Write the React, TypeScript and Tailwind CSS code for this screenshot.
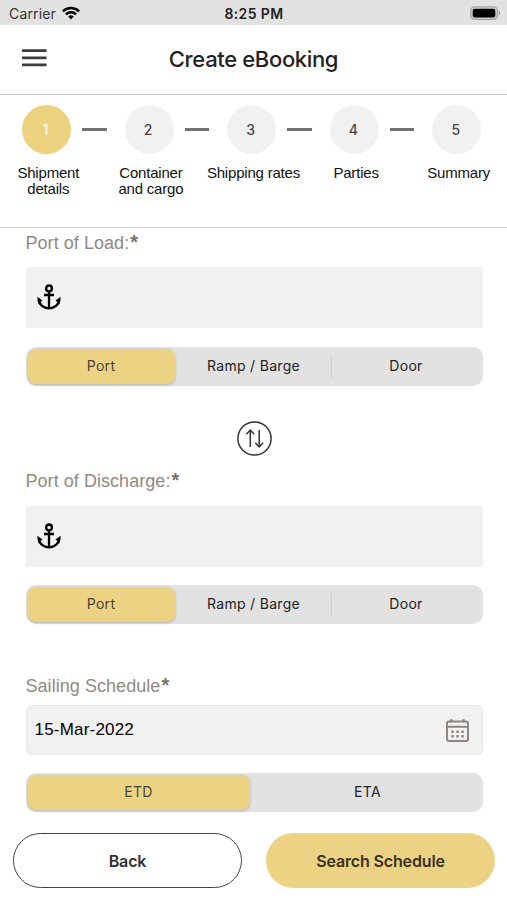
import clsx from 'clsx';

interface Step {
    number: number;
    label: string;
}

const STEPS: Step[] = [
    { number: 1, label: 'Shipment details' },
    { number: 2, label: 'Container and cargo' },
    { number: 3, label: 'Shipping rates' },
    { number: 4, label: 'Parties' },
    { number: 5, label: 'Summary' },
];

function StatusBar() {
    return (
        <div className="grid h-[25px] grid-cols-3 items-center bg-[#e2e2e2] pt-[2px] pr-[6px] pl-[9px] text-[14px] leading-[22px] text-[#222]">
            <div className="flex items-center gap-[6px]">
                <span className="tracking-[0.15px] text-[#333]">Carrier</span>
                <svg className="-mt-[2px]" width="18" height="14" viewBox="0 0 18 14" fill="none" stroke="#000" strokeWidth="2.5">
                    <path d="M0.9 5.3a11.5 11.5 0 0 1 16.2 0" />
                    <path d="M3.9 8.4a7.2 7.2 0 0 1 10.2 0" />
                    <path d="M9 13.5l-2.8-2.9a4 4 0 0 1 5.6 0z" fill="#000" stroke="none" />
                </svg>
            </div>
            <span className="-ml-[2px] text-center font-semibold whitespace-nowrap tracking-[0.4px]">8:25 PM</span>
            <svg className="justify-self-end" width="31" height="15" viewBox="0 0 31 15">
                <rect x="0.8" y="0.8" width="26.6" height="12.6" rx="3.8" fill="#d2d2d2" stroke="#a3a3a3" strokeWidth="1.3" />
                <rect x="2.7" y="2.7" width="22.6" height="8.8" rx="2" fill="#000" />
                <path d="M28.8 4.8c1.6.6 1.6 4 0 4.6z" fill="#999" />
            </svg>
        </div>
    );
}

function Header() {
    return (
        <header className="grid h-[70px] grid-cols-[60px_1fr_60px] items-center border-b-[1.5px] border-[#c6c6c6]">
            <svg className="ml-[22px] -mt-[4px]" width="25" height="18" viewBox="0 0 25 18" fill="#3d3d3d">
                <rect y="0.2" width="24.6" height="2.8" rx="0.4" />
                <rect y="7.4" width="24.6" height="2.8" rx="0.4" />
                <rect y="14.5" width="24.6" height="2.8" rx="0.4" />
            </svg>
            <h1 className="text-center text-[22px] font-medium tracking-[-0.35px] text-[#222]">Create eBooking</h1>
        </header>
    );
}

function Stepper({ active }: { active: number }) {
    return (
        <div className="h-[133px] overflow-hidden border-b border-[#cfcfcf] pt-[10px]">
            <ol className="-ml-[3px] flex w-[513px]">
                {STEPS.map((step, i) => (
                    <li key={step.number} className="w-[102.6px] shrink-0">
                        <div className="flex items-center gap-[11px] pl-[25px]">
                            <span
                                className={clsx(
                                    'flex size-[49px] shrink-0 items-center justify-center rounded-full pr-[2px] pb-px font-[Inter] text-[14px]',
                                    step.number === active ? 'bg-[#ecd27f] text-white' : 'bg-[#f1f1f1] font-medium text-[#444]',
                                )}
                            >
                                {step.number}
                            </span>
                            {i < STEPS.length - 1 && <span className="h-[2.5px] w-[24.5px] shrink-0 bg-[#737373]" />}
                        </div>
                        <p
                            className={clsx(
                                "mx-auto mt-[11px] w-fit text-center font-['Liberation_Sans',sans-serif] text-[15px] leading-[15.5px] tracking-[-0.2px] text-[#111]",
                                i < 2 ? 'max-w-[76px]' : 'whitespace-nowrap',
                            )}
                        >
                            {step.label}
                        </p>
                    </li>
                ))}
            </ol>
        </div>
    );
}

function FieldLabel({ children }: { children: string }) {
    return (
        <p className="font-['Liberation_Sans',sans-serif] text-[18px] leading-[22px] tracking-[0.05px] text-[#918a84]">
            {children}
            <span className="ml-px text-[20px] leading-[20px] font-bold text-[#77716d]">*</span>
        </p>
    );
}

function AnchorIcon() {
    return (
        <svg className="-mt-px" width="24" height="26" viewBox="0 0 24 26" fill="none" stroke="#000" strokeWidth="2.3">
            <circle cx="12" cy="4.4" r="2.9" />
            <path d="M12 7v17M7 11h10" />
            <path d="M1.5 15.5c.6 5.3 5.2 8.8 10.5 8.8s9.9-3.5 10.5-8.8" />
            <path d="M.3 12.8l5.2 3.8-4.2 3.2zM23.7 12.8l-5.2 3.8 4.2 3.2z" fill="#000" stroke="none" />
        </svg>
    );
}

function CalendarIcon() {
    return (
        <svg width="23" height="23" viewBox="0 0 23 23" fill="none" stroke="#8f8680" strokeWidth="2">
            <rect x="1" y="2.5" width="21" height="19.5" rx="2" />
            <path d="M1 7.8h21" />
            <path d="M5.5 .3v3M17.5 .3v3" strokeWidth="2.5" />
            <path d="M5.3 12.8h12.6M5.3 17.3h12.6" strokeWidth="2.5" strokeDasharray="2.5 2.5" />
        </svg>
    );
}

function SegmentedControl({ options }: { options: string[] }) {
    return (
        <div className="flex h-[39px] rounded-[10px] bg-[#e2e2e2] p-[2px]">
            {options.map((option, i) => (
                <div
                    key={option}
                    className={clsx(
                        'flex items-center justify-center text-[14px] tracking-[0.3px]',
                        i === 0
                            ? 'rounded-[8px] bg-[#ecd383] text-[#4b4330] shadow-[0_1px_3px_rgba(0,0,0,0.22)]'
                            : 'text-[#222]',
                        // the selected pill is a little narrower than its neighbours
                        options.length === 2 && (i === 0 ? 'w-[222px]' : 'flex-1 pl-[5px]'),
                        options.length === 3 && (i === 0 ? 'w-[147px]' : i === 1 ? 'w-[156px] pl-[2px]' : 'flex-1 pl-px'),
                    )}
                >
                    {i > 1 && <span className="-ml-px h-[23px] w-px bg-[#cfcfcf]" />}
                    <span className="flex-1 pb-[2px] text-center">{option}</span>
                </div>
            ))}
        </div>
    );
}

function PortField({ label }: { label: string }) {
    return (
        <div>
            <FieldLabel>{label}</FieldLabel>
            <div className="mt-[13.5px] flex h-[61px] items-center bg-[#f1f1f1] pl-[11.5px]">
                <AnchorIcon />
            </div>
            <div className="mt-[18.5px]">
                <SegmentedControl options={['Port', 'Ramp / Barge', 'Door']} />
            </div>
        </div>
    );
}

function SwapButton() {
    return (
        <button className="mt-[35.5px] mb-[14px] ml-[211px] block">
            <svg width="35" height="35" viewBox="0 0 35 35" fill="none" stroke="#333" strokeWidth="1.5">
                <circle cx="17.5" cy="17.5" r="16.6" />
                <path d="M13.3 26V9.3M9.4 13.3l3.900-4.200 3.900 4.200" />
                <path d="M22.2 9v16.7M18.3 21.7l3.900 4.200 3.900-4.200" />
            </svg>
        </button>
    );
}

export default function App() {
    return (
        <div className="flex h-[900px] w-[507px] flex-col overflow-hidden bg-white font-[Inter,sans-serif]">
            <StatusBar />
            <Header />
            <Stepper active={1} />
            <main className="pt-[3.5px] pr-[24.5px] pl-[25.5px]">
                <PortField label="Port of Load:" />
                <SwapButton />
                <PortField label="Port of Discharge:" />
                <div className="mt-[50.5px]">
                    <FieldLabel>Sailing Schedule</FieldLabel>
                    <div className="mt-[8.5px] flex h-[50px] items-center justify-between rounded-[6px] border border-[#e5e5e5] bg-[#f1f1f1] pr-[13px] pl-[8px]">
                        <span className="font-['Liberation_Sans',sans-serif] text-[17px] tracking-[0.2px] text-black">15-Mar-2022</span>
                        <CalendarIcon />
                    </div>
                    <div className="mt-[18px]">
                        <SegmentedControl options={['ETD', 'ETA']} />
                    </div>
                </div>
            </main>
            <footer className="mt-[21px] grid grid-cols-2 gap-[24px] pr-[12px] pl-[13px] text-[16px] font-semibold tracking-[-0.15px]">
                <button className="h-[55px] rounded-full border-[1.5px] border-[#444] text-[#303030]">Back</button>
                <button className="h-[55px] rounded-full bg-[#ecd383] text-[#39301c]">Search Schedule</button>
            </footer>
        </div>
    );
}
